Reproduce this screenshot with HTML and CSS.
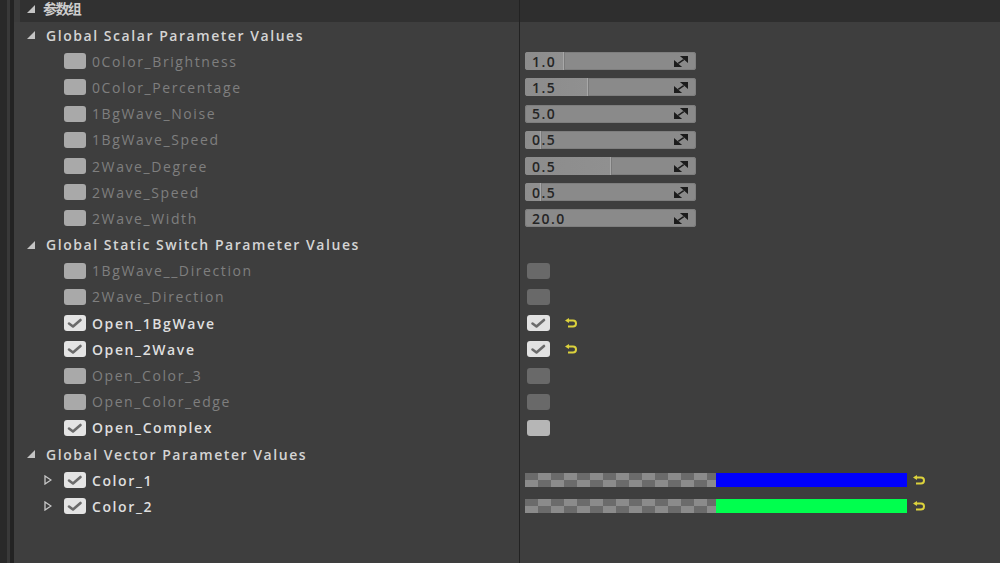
FILE: index.html
```html
<!DOCTYPE html>
<html lang="zh">
<head>
<meta charset="utf-8">
<title>参数组</title>
<link rel="stylesheet" href="styles.css">
</head>
<body>
<div class="gutter"></div>
<div class="panel">
  <div class="row header">
    <div class="name">
      <svg class="tri" viewBox="0 0 8 8"><polygon points="8,0 8,8 0,8"/></svg>
      <span class="group-title">参数组</span>
    </div>
    <div class="value"></div>
  </div>

  <div class="row section">
    <div class="name"><svg class="tri" viewBox="0 0 8 8"><polygon points="8,0 8,8 0,8"/></svg><span>Global Scalar Parameter Values</span></div>
    <div class="value"></div>
  </div>
  <div class="row param">
    <div class="name"><span class="cb off"></span><span class="label dim">0Color_Brightness</span></div>
    <div class="value"><div class="slider"><div class="fill" style="width:39px"></div><span class="num">1.0</span><svg class="spin" viewBox="0 0 14 12"><polygon points="7,0 14,0 14,6"/><polygon points="0,6 0,12 7,12"/><line x1="4" y1="8" x2="10" y2="4"/></svg></div></div>
  </div>
  <div class="row param">
    <div class="name"><span class="cb off"></span><span class="label dim">0Color_Percentage</span></div>
    <div class="value"><div class="slider"><div class="fill" style="width:63px"></div><span class="num">1.5</span><svg class="spin" viewBox="0 0 14 12"><polygon points="7,0 14,0 14,6"/><polygon points="0,6 0,12 7,12"/><line x1="4" y1="8" x2="10" y2="4"/></svg></div></div>
  </div>
  <div class="row param">
    <div class="name"><span class="cb off"></span><span class="label dim">1BgWave_Noise</span></div>
    <div class="value"><div class="slider"><span class="num">5.0</span><svg class="spin" viewBox="0 0 14 12"><polygon points="7,0 14,0 14,6"/><polygon points="0,6 0,12 7,12"/><line x1="4" y1="8" x2="10" y2="4"/></svg></div></div>
  </div>
  <div class="row param">
    <div class="name"><span class="cb off"></span><span class="label dim">1BgWave_Speed</span></div>
    <div class="value"><div class="slider"><div class="fill" style="width:16px"></div><span class="num">0.5</span><svg class="spin" viewBox="0 0 14 12"><polygon points="7,0 14,0 14,6"/><polygon points="0,6 0,12 7,12"/><line x1="4" y1="8" x2="10" y2="4"/></svg></div></div>
  </div>
  <div class="row param">
    <div class="name"><span class="cb off"></span><span class="label dim">2Wave_Degree</span></div>
    <div class="value"><div class="slider"><div class="fill" style="width:86px"></div><span class="num">0.5</span><svg class="spin" viewBox="0 0 14 12"><polygon points="7,0 14,0 14,6"/><polygon points="0,6 0,12 7,12"/><line x1="4" y1="8" x2="10" y2="4"/></svg></div></div>
  </div>
  <div class="row param">
    <div class="name"><span class="cb off"></span><span class="label dim">2Wave_Speed</span></div>
    <div class="value"><div class="slider"><div class="fill" style="width:16px"></div><span class="num">0.5</span><svg class="spin" viewBox="0 0 14 12"><polygon points="7,0 14,0 14,6"/><polygon points="0,6 0,12 7,12"/><line x1="4" y1="8" x2="10" y2="4"/></svg></div></div>
  </div>
  <div class="row param">
    <div class="name"><span class="cb off"></span><span class="label dim">2Wave_Width</span></div>
    <div class="value"><div class="slider"><span class="num">20.0</span><svg class="spin" viewBox="0 0 14 12"><polygon points="7,0 14,0 14,6"/><polygon points="0,6 0,12 7,12"/><line x1="4" y1="8" x2="10" y2="4"/></svg></div></div>
  </div>

  <div class="row section">
    <div class="name"><svg class="tri" viewBox="0 0 8 8"><polygon points="8,0 8,8 0,8"/></svg><span>Global Static Switch Parameter Values</span></div>
    <div class="value"></div>
  </div>
  <div class="row param">
    <div class="name"><span class="cb off"></span><span class="label dim">1BgWave__Direction</span></div>
    <div class="value"><span class="vcb disabled"></span></div>
  </div>
  <div class="row param">
    <div class="name"><span class="cb off"></span><span class="label dim">2Wave_Direction</span></div>
    <div class="value"><span class="vcb disabled"></span></div>
  </div>
  <div class="row param">
    <div class="name"><span class="cb on"><svg viewBox="0 0 22 16"><path d="M5 8.5 L9 11.5 L16.5 5"/></svg></span><span class="label">Open_1BgWave</span></div>
    <div class="value"><span class="vcb on"><svg viewBox="0 0 22 16"><path d="M5 8.5 L9 11.5 L16.5 5"/></svg></span><svg class="reset sw" viewBox="0 0 13 10"><polygon points="0,2.5 4,0 4,5"/><path d="M3.5 2.5 H8 A3 3 0 0 1 8 8.5 H3"/></svg></div>
  </div>
  <div class="row param">
    <div class="name"><span class="cb on"><svg viewBox="0 0 22 16"><path d="M5 8.5 L9 11.5 L16.5 5"/></svg></span><span class="label">Open_2Wave</span></div>
    <div class="value"><span class="vcb on"><svg viewBox="0 0 22 16"><path d="M5 8.5 L9 11.5 L16.5 5"/></svg></span><svg class="reset sw" viewBox="0 0 13 10"><polygon points="0,2.5 4,0 4,5"/><path d="M3.5 2.5 H8 A3 3 0 0 1 8 8.5 H3"/></svg></div>
  </div>
  <div class="row param">
    <div class="name"><span class="cb off"></span><span class="label dim">Open_Color_3</span></div>
    <div class="value"><span class="vcb disabled"></span></div>
  </div>
  <div class="row param">
    <div class="name"><span class="cb off"></span><span class="label dim">Open_Color_edge</span></div>
    <div class="value"><span class="vcb disabled"></span></div>
  </div>
  <div class="row param">
    <div class="name"><span class="cb on"><svg viewBox="0 0 22 16"><path d="M5 8.5 L9 11.5 L16.5 5"/></svg></span><span class="label">Open_Complex</span></div>
    <div class="value"><span class="vcb unchecked"></span></div>
  </div>

  <div class="row section">
    <div class="name"><svg class="tri" viewBox="0 0 8 8"><polygon points="8,0 8,8 0,8"/></svg><span>Global Vector Parameter Values</span></div>
    <div class="value"></div>
  </div>
  <div class="row vec">
    <div class="name"><svg class="expand" viewBox="0 0 8 10"><polygon points="1,1 7,5 1,9"/></svg><span class="cb on"><svg viewBox="0 0 22 16"><path d="M5 8.5 L9 11.5 L16.5 5"/></svg></span><span class="label">Color_1</span></div>
    <div class="value"><div class="colorbar"><span class="alpha"></span><span class="swatch blue"></span></div><svg class="reset cl" viewBox="0 0 13 10"><polygon points="0,2.5 4,0 4,5"/><path d="M3.5 2.5 H8 A3 3 0 0 1 8 8.5 H3"/></svg></div>
  </div>
  <div class="row vec">
    <div class="name"><svg class="expand" viewBox="0 0 8 10"><polygon points="1,1 7,5 1,9"/></svg><span class="cb on"><svg viewBox="0 0 22 16"><path d="M5 8.5 L9 11.5 L16.5 5"/></svg></span><span class="label">Color_2</span></div>
    <div class="value"><div class="colorbar"><span class="alpha"></span><span class="swatch green"></span></div><svg class="reset cl" viewBox="0 0 13 10"><polygon points="0,2.5 4,0 4,5"/><path d="M3.5 2.5 H8 A3 3 0 0 1 8 8.5 H3"/></svg></div>
  </div>

  <div class="row filler">
    <div class="name"></div>
    <div class="value"></div>
  </div>
</div>
</body>
</html>
```

FILE: styles.css
```css
* { box-sizing: border-box; }
html, body { height: 100%; }
body {
  margin: 0;
  background: #3e3e3e;
  display: flex;
  overflow: hidden;
  font-family: "Open Sans", Roboto, "Noto Sans", "Noto Sans CJK SC", sans-serif;
  -webkit-font-smoothing: antialiased;
}
.gutter {
  width: 14px;
  flex: none;
  background: linear-gradient(to right, #292929 0 7px, #393939 7px 10px, #232323 10px 14px);
}
.panel {
  flex: 1;
  display: flex;
  flex-direction: column;
  min-width: 0;
}
.row {
  display: grid;
  grid-template-columns: 506px 1fr;
  height: 26.2px;
  flex: none;
}
.name {
  display: flex;
  align-items: center;
  border-right: 1px solid #222;
  min-width: 0;
  white-space: nowrap;
}
.value {
  display: flex;
  align-items: center;
  padding-left: 5px;
}
.header {
  height: 22px;
  background: #2f2f2f;
}
.header .name {
  border-left: 6px solid #3b3b3b;
  padding-left: 7px;
  align-items: flex-start;
  background: #313131;
}
.header .value { background: #2e2e2e; }
.tri {
  width: 8px;
  height: 8px;
  fill: #c4c4c4;
  flex: none;
}
.header .tri { margin-top: 5px; }
.group-title {
  margin-left: 8px;
  font-family: "Noto Sans CJK SC", sans-serif;
  font-size: 14px;
  font-weight: 700;
  line-height: 16px;
  color: #cdcdcd;
  letter-spacing: -1.6px;
}
.section .name {
  padding-left: 13px;
  font-size: 14px;
  font-weight: 600;
  color: #d4d4d4;
  letter-spacing: 1.55px;
}
.section .name span { margin-left: 11px; }
.param .name { padding-left: 50px; }
.vec .name { padding-left: 30px; }
.expand {
  width: 8px;
  height: 10px;
  fill: none;
  stroke: #c8c8c8;
  stroke-width: 1.3;
  margin-right: 12px;
  flex: none;
}
.cb {
  width: 22px;
  height: 16px;
  border-radius: 3px;
  flex: none;
  display: flex;
}
.cb.off { background: #a9a9a9; }
.cb.on { background: #e4e4e4; }
.cb svg, .vcb svg {
  width: 100%;
  height: 100%;
  fill: none;
  stroke: #6b6b6b;
  stroke-width: 2.6;
  stroke-linecap: round;
  stroke-linejoin: round;
}
.label {
  margin-left: 6px;
  font-size: 14px;
  font-weight: 600;
  letter-spacing: 1.6px;
  color: #dedede;
}
.label.dim { color: #7f7f7f; font-weight: 500; }
.slider {
  position: relative;
  width: 171px;
  height: 18px;
  background: #8a8a8a;
  border-radius: 3px;
  box-shadow: inset 0 0 0 1px #7e7e7e;
  display: flex;
  align-items: center;
  overflow: hidden;
}
.fill {
  position: absolute;
  left: 0;
  top: 0;
  bottom: 0;
  background: linear-gradient(to right, #8c8c8c, #909090);
  border-right: 1px solid #a8a8a8;
  box-shadow: 1px 0 0 #7a7a7a;
}
.num {
  position: relative;
  margin-left: 7px;
  font-size: 14px;
  font-weight: 600;
  letter-spacing: 1.5px;
  color: #252525;
}
.spin {
  position: relative;
  margin-left: auto;
  margin-right: 8px;
  width: 14px;
  height: 11px;
  fill: #1c1c1c;
  stroke: #1c1c1c;
  stroke-width: 1.6;
}
.vcb {
  margin-left: 2px;
  width: 23px;
  height: 16px;
  border-radius: 3px;
  display: flex;
}
.vcb.disabled { background: #696969; }
.vcb.unchecked { background: #b6b6b6; }
.vcb.on { background: #e2e2e2; }
.reset {
  width: 13px;
  height: 10px;
  fill: #dcd23c;
  flex: none;
}
.reset path {
  fill: none;
  stroke: #dcd23c;
  stroke-width: 2;
}
.reset.sw { margin-left: 15px; }
.reset.cl { margin-left: 6px; }
.colorbar {
  display: flex;
  width: 382px;
  height: 14px;
}
.alpha {
  width: 191px;
  background: repeating-conic-gradient(#8b8b8b 0 25%, #6b6b6b 0 50%) 0 0 / 26px 14px;
}
.swatch { flex: 1; }
.swatch.blue { background: #0000ff; }
.swatch.green { background: #00ff4e; }
.row.filler { flex: 1; height: auto; }
```
